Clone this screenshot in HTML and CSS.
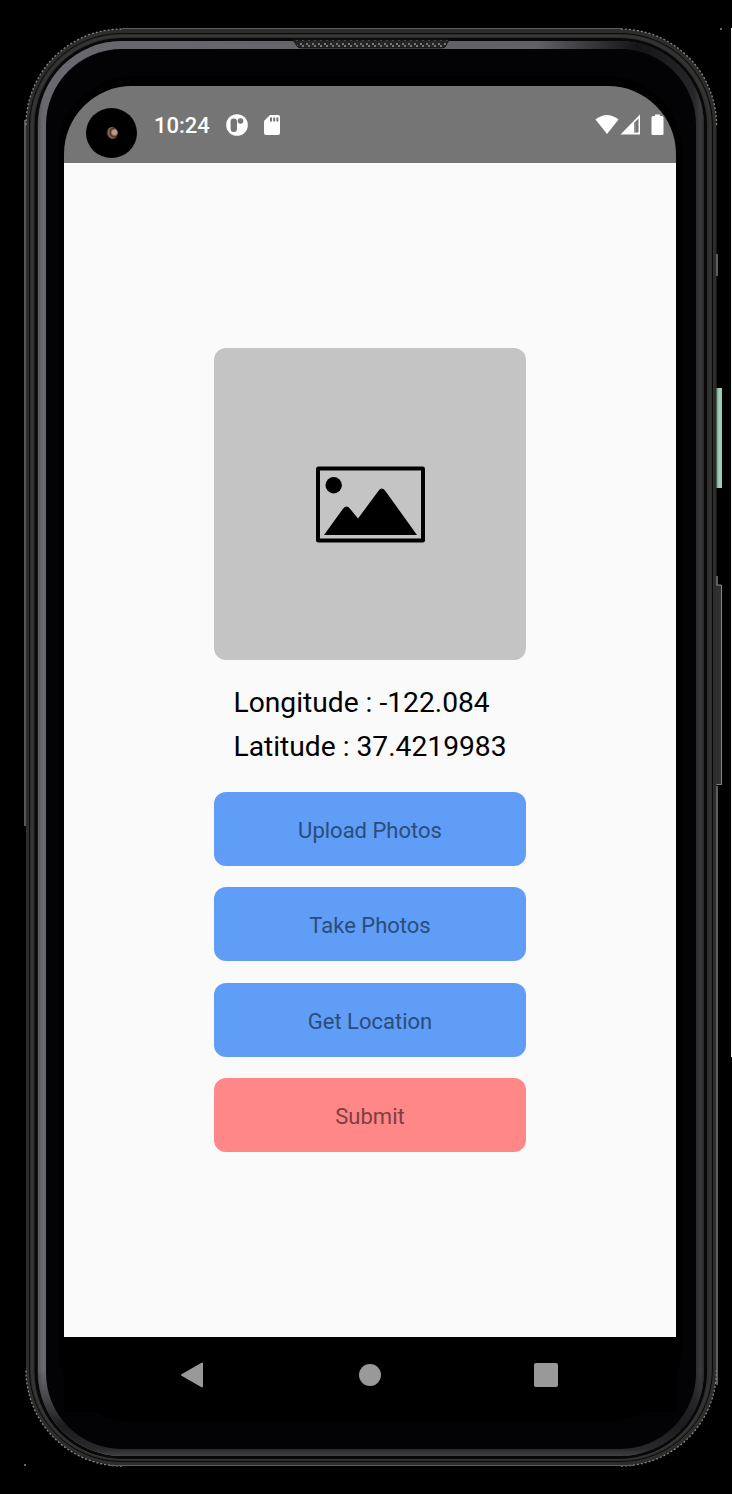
FILE: index.html
```html
<!DOCTYPE html>
<html lang="en">
<head>
<meta charset="utf-8">
<title>Photo location</title>
<link rel="stylesheet" href="styles.css">
</head>
<body>
<main class="device">
  <svg class="bezel" viewBox="0 0 732 1494" aria-hidden="true">
    <defs>
      <linearGradient id="rim" gradientUnits="userSpaceOnUse" x1="38" y1="0" x2="704" y2="0">
        <stop offset="0" stop-color="#55555a"/><stop offset=".007" stop-color="#68686e"/><stop offset=".75" stop-color="#606065"/><stop offset=".9" stop-color="#151517"/><stop offset=".985" stop-color="#262628"/><stop offset=".995" stop-color="#3b3b3d"/><stop offset="1" stop-color="#29292b"/>
      </linearGradient>
      <linearGradient id="rim-low" gradientUnits="userSpaceOnUse" x1="0" y1="1370" x2="0" y2="1456">
        <stop offset="0" stop-color="#2c2c2f" stop-opacity="0"/><stop offset=".65" stop-color="#1c1c1f"/><stop offset=".92" stop-color="#29292b"/><stop offset="1" stop-color="#414143"/>
      </linearGradient>
      <linearGradient id="green"><stop offset="0" stop-color="#628b77"/><stop offset=".5" stop-color="#a6d1b9"/><stop offset="1" stop-color="#9acbaf"/></linearGradient>
      <pattern id="mesh" width="6" height="6" patternUnits="userSpaceOnUse"><rect width="6" height="6" fill="#242424"/><path d="M0 1h2v2h2v2H2V3H0z" fill="#777"/></pattern>
    </defs>
    <path d="M25 120V826" stroke="#747672" stroke-width="1.500"/>
    <path d="M716 388h6v100h-6z" fill="url(#green)"/>
    <path d="M716 585h5.500v199.500H716" fill="#303030" stroke="#858585"/>
    <rect x="26" y="29" width="690.500" height="1437" rx="96" fill="#2d2d2c"/>
    <path d="M26 125A96 96 0 0 1 122 29M621 29A96 96 0 0 1 716.500 125M716.500 1370A96 96 0 0 1 621 1466M122 1466A96 96 0 0 1 26 1370" fill="none" stroke="#858581" stroke-width="1.300" stroke-dasharray="2 2"/>
    <path d="M122 28.500H621M108 1465.500H634" stroke="#5c5e5c"/>
    <path d="M717 254V276M717 576V585M717 786V1385" stroke="#777975" stroke-width="1.500"/>
    <g fill="none">
      <rect x="29.500" y="33.500" width="683" height="1428" rx="92" stroke="#090909"/>
      <rect x="32" y="36" width="678" height="1423" rx="90" stroke="#353535" stroke-width="2"/>
      <rect x="36" y="39.500" width="669.500" height="1418" rx="86" stroke="#080808" stroke-width="3"/>
    </g>
    <rect x="38" y="41" width="666" height="1415" rx="84" fill="url(#rim)"/>
    <rect x="38" y="41" width="666" height="1415" rx="84" fill="url(#rim-low)"/>
    <rect x="46" y="49" width="650" height="1400" rx="76" fill="#030305"/>
    <rect x="58" y="76" width="624" height="1346" rx="76" fill="#000"/>
    <path d="M293 40H449L445 47Q444 48 440 48H302Q298 48 297 46z" fill="url(#mesh)" stroke="#151515"/>
    <path d="M731 28H732V1057H731z" fill="#f5f5f5"/>
    <path d="M720 28h2v2h-2zM24 1464h2v2h-2z" fill="#666"/>
  </svg>
  <section class="screen">
    <header class="status">
      <span class="camera"><i class="lens"></i></span>
      <time class="clock">10:24</time>
      <svg class="app-icon" viewBox="0 0 22 22"><circle cx="11" cy="11" r="10.800" fill="#fff"/><rect x="4.600" y="4.500" width="6.400" height="13.500" rx="3.200" fill="#757575"/><circle cx="14.500" cy="7" r="2.800" fill="#757575"/></svg>
      <svg class="sd-icon" viewBox="0 0 16 20"><path d="M6 0h8q2 0 2 2v16q0 2-2 2H2q-2 0-2-2V6z" fill="#fff"/><path d="M7 2.500v4M10.200 2.500v4M13.400 2.500v4" stroke="#757575" stroke-width="2"/></svg>
      <svg class="signals" viewBox="0 0 70 22"><path d="M.5 5.500Q12-3.500 23.500 5.500L12 20z" fill="#fff"/><path d="M25.500 20.500L45 .5V20.500z" fill="#fff"/><path d="M39 9L43.500 4.500V18.500H39z" fill="#757575"/><path d="M39 8.500h1.500V18.500H39z" fill="#999"/><path d="M60 .5h5v1.500h2q1.500 0 1.500 1.500V19.500q0 1.500-1.500 1.500h-9Q56.500 21 56.500 19.500V3.500Q56.500 2 58 2h2z" fill="#fff"/></svg>
    </header>
    <div class="content">
      <div class="photo">
        <svg class="picture" viewBox="0 0 110 78"><rect x="3" y="3.500" width="105" height="72" rx=".5" fill="none" stroke="#000" stroke-width="4"/><circle cx="18.700" cy="20.300" r="8.200" fill="#000"/><path d="M9 70L28 43.800Q31.500 39 35 43.800L43 53.500 63 26.500Q66.300 21 70 25.500L102 70z" fill="#000"/></svg>
      </div>
      <div class="coords"><p>Longitude : -122.084</p><p>Latitude : 37.4219983</p></div>
      <div class="actions">
        <button class="btn">Upload Photos</button>
        <button class="btn">Take Photos</button>
        <button class="btn">Get Location</button>
        <button class="btn submit">Submit</button>
      </div>
    </div>
    <nav class="nav">
      <svg class="key" viewBox="0 0 24 26"><path d="M2 13L22 1.500V24.500z" fill="#999" stroke="#999" stroke-width="2" stroke-linejoin="round"/></svg>
      <svg class="key" viewBox="0 0 24 26"><circle cx="13" cy="13" r="11" fill="#999"/></svg>
      <svg class="key" viewBox="0 0 24 26"><rect y="1" width="24" height="24" rx="2" fill="#999"/></svg>
    </nav>
  </section>
</main>
</body>
</html>
```

FILE: styles.css
```css
* { box-sizing: border-box; }
body { margin: 0; background: #000; font-family: Roboto, "Liberation Sans", sans-serif; }
.device { position: relative; width: 732px; height: 1494px; padding: 86px 56px 82px 64px; overflow: hidden; }
.bezel { position: absolute; inset: 0; width: 732px; height: 1494px; }
.screen { position: relative; width: 612px; height: 1326px; display: flex; flex-direction: column; border-radius: 68px 68px 0 0; overflow: hidden; background: #000; }
.status { height: 77px; flex: none; display: flex; align-items: center; padding: 1px 11px 0 22px; background: #757575; }
.camera { width: 51px; height: 50px; margin-top: 16px; border-radius: 50%; background: #000; display: flex; align-items: center; justify-content: center; }
.lens { width: 12px; height: 12px; border-radius: 50%; background: radial-gradient(circle at 70% 45%, #c09a83 0 20%, #443027 40%, #8e6e5a 55%, #110c0a 75%); }
.clock { width: 72px; margin-left: 17px; color: #fff; font-size: 22px; font-weight: 500; }
.app-icon { width: 22px; height: 22px; }
.sd-icon { width: 16px; height: 20px; margin-left: 16px; }
.signals { width: 70px; height: 22px; margin-left: auto; }
.content { flex: none; height: 1174px; display: flex; flex-direction: column; align-items: center; padding-top: 185px; background: #fafafa; }
.photo { width: 312px; height: 312px; border-radius: 12px; background: #c4c4c4; display: flex; align-items: center; justify-content: center; }
.picture { width: 110px; height: 78px; }
.coords { margin-top: 21px; font-size: 28.2px; line-height: 44px; color: #000; }
.coords p { margin: 0; white-space: nowrap; }
.actions { margin-top: 23px; display: flex; flex-direction: column; gap: 21.400px; }
.btn { width: 312px; height: 74px; border: 0; border-radius: 12px; padding: 3px 0 0; background: #5f9df7; color: #2c4c7b; font: 22px Roboto, "Liberation Sans", sans-serif; }
.submit { background: #ff8787; color: #7b3f3f; }
.nav { flex: 1; display: flex; justify-content: space-between; padding: 25px 118px 0 116px; }
.key { width: 24px; height: 26px; }
```
